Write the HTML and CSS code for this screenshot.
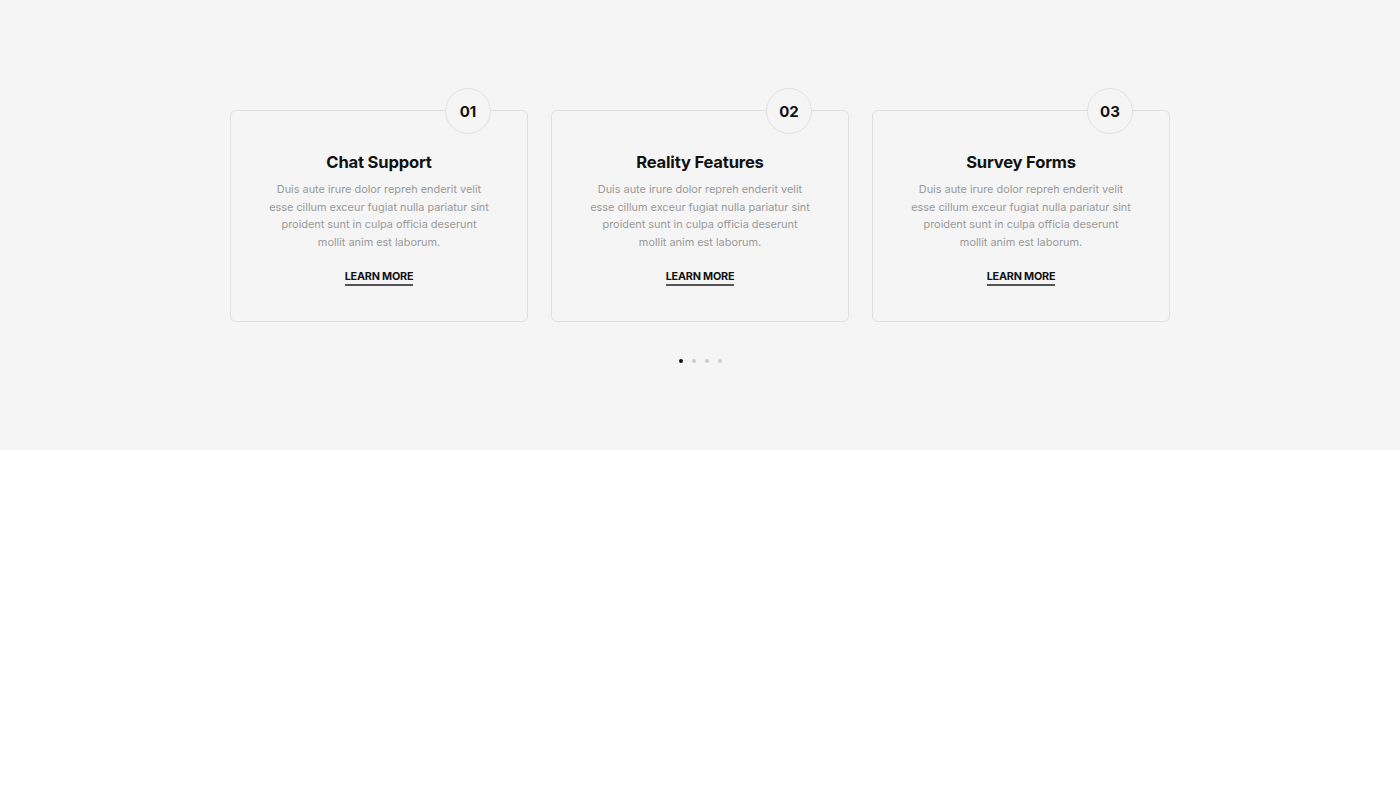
FILE: index.html
```html
<!DOCTYPE html>
<html lang="en">

<head>
    <meta charset="UTF-8">
    <meta name="viewport" content="width=device-width, initial-scale=1.0">
    <title>Services</title>
    <link rel="stylesheet" href="styles.css">
</head>

<body>
    <section class="services">
        <div class="cards">
            <div class="card">
                <span class="num">01</span>
                <h3>Chat Support</h3>
                <p>Duis aute irure dolor repreh enderit velit esse cillum exceur fugiat nulla pariatur sint proident
                    sunt in culpa officia deserunt mollit anim est laborum.</p>
                <a href="#" class="more">LEARN MORE</a>
            </div>
            <div class="card">
                <span class="num">02</span>
                <h3>Reality Features</h3>
                <p>Duis aute irure dolor repreh enderit velit esse cillum exceur fugiat nulla pariatur sint proident
                    sunt in culpa officia deserunt mollit anim est laborum.</p>
                <a href="#" class="more">LEARN MORE</a>
            </div>
            <div class="card">
                <span class="num">03</span>
                <h3>Survey Forms</h3>
                <p>Duis aute irure dolor repreh enderit velit esse cillum exceur fugiat nulla pariatur sint proident
                    sunt in culpa officia deserunt mollit anim est laborum.</p>
                <a href="#" class="more">LEARN MORE</a>
            </div>
        </div>
        <div class="dots">
            <span class="dot active"></span>
            <span class="dot"></span>
            <span class="dot"></span>
            <span class="dot"></span>
        </div>
    </section>
</body>

</html>
```

FILE: styles.css
```css
body {
    margin: 0;
    background: #fff;
    font-family: Inter, "Noto Sans", sans-serif;
}

.services {
    background: #f5f5f5;
    height: 450px;
    box-sizing: border-box;
    padding-top: 110px;
}

.cards {
    display: flex;
    justify-content: center;
    gap: 23px;
}

.card {
    position: relative;
    width: 298px;
    height: 212px;
    box-sizing: border-box;
    border: 1px solid #e0e0e0;
    border-radius: 6px;
    padding: 40px 30px 0;
    text-align: center;
}

.num {
    position: absolute;
    top: -23px;
    right: 36px;
    width: 44px;
    height: 44px;
    border: 1px solid #e2e2e2;
    border-radius: 50%;
    background: #f5f5f5;
    display: flex;
    align-items: center;
    justify-content: center;
    font-size: 15px;
    font-weight: 700;
    color: #111;
}

.card h3 {
    margin: 0 0 8px;
    font-size: 16.6px;
    line-height: 22px;
    font-weight: 700;
    color: #111;
    letter-spacing: -0.2px;
}

.card p {
    margin: 0 auto;
    width: 222px;
    font-size: 10.9px;
    line-height: 17.5px;
    color: #9a9a9a;
}

.more {
    display: inline-block;
    margin-top: 19px;
    font-size: 10.8px;
    font-weight: 700;
    color: #111;
    text-decoration: none;
    border-bottom: 2px solid #555;
    padding-bottom: 1px;
    letter-spacing: -0.2px;
}

.dots {
    display: flex;
    justify-content: center;
    gap: 9px;
    margin-top: 37px;
}

.dot {
    width: 4px;
    height: 4px;
    border-radius: 50%;
    background: #ccc;
}

.dot.active {
    background: #111;
}
```
